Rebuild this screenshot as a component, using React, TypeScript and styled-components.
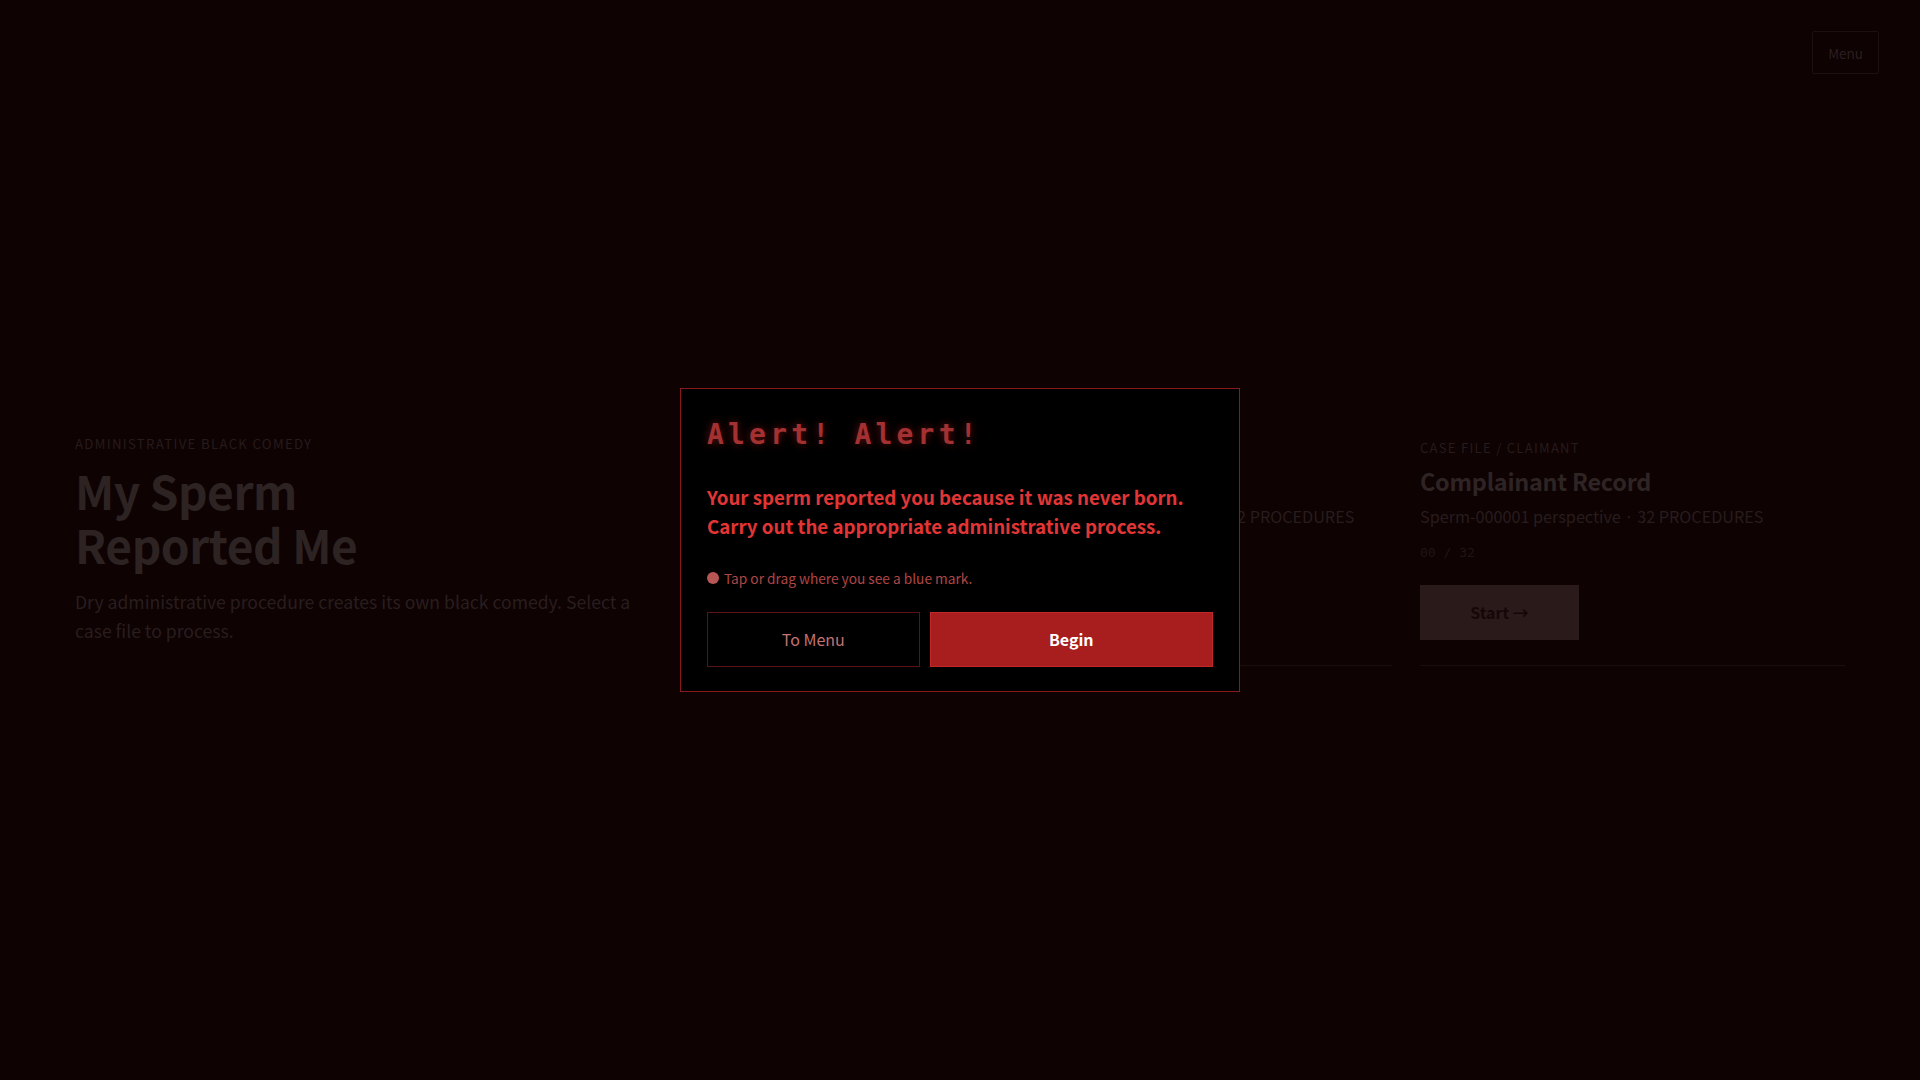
import React from 'react'
import styled, { createGlobalStyle } from 'styled-components'

const sans = `'Noto Sans CJK JP', 'Noto Sans', sans-serif`
const mono = `'DejaVu Sans Mono', 'Liberation Mono', monospace`

const GlobalStyle = createGlobalStyle`
    * {
        box-sizing: border-box;
    }
    html, body {
        margin: 0;
        padding: 0;
        background: #0e0203;
        font-family: ${sans};
    }
`

const Page = styled.div`
    min-height: 100vh;
    display: grid;
    grid-template-rows: auto 1fr;
    background: #0e0203;
`

const Header = styled.header`
    display: flex;
    justify-content: flex-end;
    padding: 31px 41px 0;
`

const MenuButton = styled.button`
    width: 67px;
    height: 43px;
    background: transparent;
    border: 1px solid #1d1010;
    border-radius: 2px;
    color: #2c1f1f;
    font-family: ${sans};
    font-size: 13.4px;
    cursor: pointer;
`

const Main = styled.main`
    display: grid;
    grid-template-columns: minmax(0, 1fr) 425px 425px;
    column-gap: 28px;
    align-items: start;
    align-content: center;
    padding: 0 75px 55px;
`

const Hero = styled.section`
    display: flex;
    flex-direction: column;
`

const Eyebrow = styled.p`
    margin: 0;
    font-size: 13.2px;
    line-height: 21px;
    letter-spacing: 0.1em;
    text-transform: uppercase;
    color: #271b1b;
`

const HeroTitle = styled.h1`
    margin: 9px 0 0;
    font-size: 46px;
    line-height: 54px;
    font-weight: 700;
    color: #2d2323;
    letter-spacing: -0.01em;
`

const HeroText = styled.p`
    margin: 16px 0 0;
    max-width: 560px;
    font-size: 17.6px;
    line-height: 29px;
    color: #291e1e;
`

const Card = styled.article`
    display: flex;
    flex-direction: column;
    align-items: flex-start;
    padding: 4px 0 25px;
    border-bottom: 1px solid #1d0e0e;
`

const CardLabel = styled(Eyebrow)`
    font-size: 13px;
`

const CardTitle = styled.h2`
    margin: 6px 0 0;
    font-size: 23.4px;
    line-height: 35px;
    font-weight: 700;
    color: #2e2424;
    letter-spacing: -0.01em;
`

const CardMeta = styled.p`
    margin: 4px 0 0;
    font-size: 16.2px;
    line-height: 27px;
    color: #281d1d;
`

const Progress = styled.p`
    margin: 13px 0 0;
    font-family: ${mono};
    font-size: 13px;
    line-height: 19.5px;
    color: #211616;
    white-space: pre;
`

const StartButton = styled.button`
    margin-top: 22px;
    width: 159px;
    height: 55px;
    border: none;
    background: #2a1a1a;
    color: #160707;
    font-family: ${sans};
    font-size: 16px;
    font-weight: 700;
    cursor: pointer;
`

const Backdrop = styled.div`
    position: fixed;
    inset: 0;
    display: flex;
    align-items: center;
    justify-content: center;
`

const Dialog = styled.div`
    width: 560px;
    padding: 29px 26px 24px;
    background: #000;
    border: 1px solid #8a1919;
`

const AlertTitle = styled.h2`
    margin: 0;
    font-family: ${mono};
    font-size: 28px;
    line-height: 1.2;
    font-weight: 700;
    letter-spacing: 0.15em;
    color: #a33131;
    text-shadow: 0 0 8px rgba(190, 30, 30, 0.55);
`

const Message = styled.p`
    margin: 31px 0 0;
    font-size: 18.7px;
    line-height: 29px;
    font-weight: 700;
    color: #e23636;
`

const Hint = styled.p`
    margin: 27px 0 0;
    display: flex;
    align-items: center;
    gap: 5px;
    font-size: 13.7px;
    line-height: 22px;
    color: #b04646;
`

const Dot = styled.span`
    width: 12px;
    height: 12px;
    border-radius: 50%;
    background: #b85555;
    flex: none;
`

const Actions = styled.div`
    margin-top: 23px;
    display: grid;
    grid-template-columns: 3fr 4fr;
    gap: 10px;
`

const ActionButton = styled.button<{ $primary?: boolean }>`
    height: 55px;
    padding: 0 0 2px;
    font-family: ${sans};
    font-size: 16px;
    font-weight: ${p => (p.$primary ? 700 : 400)};
    color: ${p => (p.$primary ? '#ffffff' : '#c27373')};
    background: ${p => (p.$primary ? '#a81e1e' : '#000')};
    border: 1px solid ${p => (p.$primary ? '#c42828' : '#5a1212')};
    cursor: pointer;
`

interface CaseFile {
    label: string
    title: string
    meta: string
}

const cases: CaseFile[] = [
    {
        label: 'Case file / Respondent',
        title: 'Respondent Record',
        meta: 'Biological-parent-01 perspective · 32 PROCEDURES',
    },
    {
        label: 'Case file / Claimant',
        title: 'Complainant Record',
        meta: 'Sperm-000001 perspective · 32 PROCEDURES',
    },
]

const App: React.FC = () => {
    return (
        <>
            <GlobalStyle />
            <Page>
                <Header>
                    <MenuButton>Menu</MenuButton>
                </Header>

                <Main>
                    <Hero>
                        <Eyebrow>Administrative black comedy</Eyebrow>
                        <HeroTitle>
                            My Sperm
                            <br />
                            Reported Me
                        </HeroTitle>
                        <HeroText>
                            Dry administrative procedure creates its own black comedy. Select a case
                            file to process.
                        </HeroText>
                    </Hero>

                    {cases.map(c => (
                        <Card key={c.title}>
                            <CardLabel>{c.label}</CardLabel>
                            <CardTitle>{c.title}</CardTitle>
                            <CardMeta>{c.meta}</CardMeta>
                            <Progress>{'00 / 32'}</Progress>
                            <StartButton>Start →</StartButton>
                        </Card>
                    ))}
                </Main>
            </Page>

            <Backdrop>
                <Dialog role="alertdialog">
                    <AlertTitle>Alert! Alert!</AlertTitle>
                    <Message>
                        Your sperm reported you because it was never born.
                        <br />
                        Carry out the appropriate administrative process.
                    </Message>
                    <Hint>
                        <Dot />
                        Tap or drag where you see a blue mark.
                    </Hint>
                    <Actions>
                        <ActionButton>To Menu</ActionButton>
                        <ActionButton $primary>Begin</ActionButton>
                    </Actions>
                </Dialog>
            </Backdrop>
        </>
    )
}

export default App
